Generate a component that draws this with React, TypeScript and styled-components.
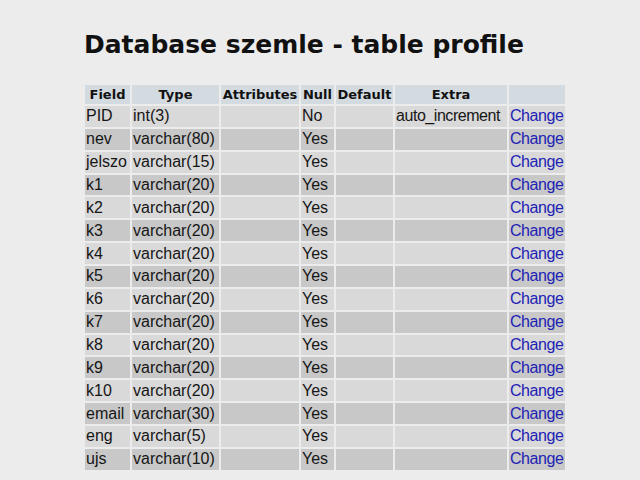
import React from "react";
import styled, { createGlobalStyle } from "styled-components";

const Global = createGlobalStyle`
  html, body { margin: 0; padding: 0; background: #ececec; }
  body { width: 640px; height: 480px; overflow: hidden; }
`;

const Page = styled.div`
  padding: 29px 0 0 83px;
  display: flex;
  flex-direction: column;
  align-items: flex-start;
`;

const Title = styled.h1`
  margin: 0 0 24px 1px;
  font-family: "DejaVu Sans", Verdana, sans-serif;
  font-weight: bold;
  font-size: 25px;
  line-height: 32px;
  color: #111;
`;

const Table = styled.table`
  width: 484px;
  border-collapse: separate;
  border-spacing: 2px;
  margin: -2px 0 0 0;
  table-layout: fixed;
`;

const Th = styled.th<{ $w: number }>`
  box-sizing: border-box;
  width: ${(p) => p.$w}px;
  height: 19px;
  padding: 0;
  background: #d3dbe0;
  font-family: "DejaVu Sans", Verdana, sans-serif;
  font-weight: bold;
  font-size: 13px;
  line-height: 19px;
  color: #111;
  text-align: center;
  white-space: nowrap;
  overflow: visible;
`;

const Td = styled.td<{ $dark: boolean; $tight?: boolean }>`
  height: 20.87px;
  padding: 0 0 0 1px;
  background: ${(p) => (p.$dark ? "#c8c8c8" : "#d9d9d9")};
  font-family: "Liberation Sans", Arial, sans-serif;
  font-size: 16px;
  line-height: 20px;
  letter-spacing: ${(p) => (p.$tight ? "-0.45px" : "0")};
  color: #161616;
  white-space: nowrap;
  overflow: hidden;
`;

const Link = styled.span`
  color: #1e22b4;
`;

const cols = [
  { name: "Field", w: 45 },
  { name: "Type", w: 87 },
  { name: "Attributes", w: 78 },
  { name: "Null", w: 33 },
  { name: "Default", w: 57 },
  { name: "Extra", w: 112 },
  { name: "", w: 56 },
];

const rows: [string, string, string, string][] = [
  ["PID", "int(3)", "No", "auto_increment"],
  ["nev", "varchar(80)", "Yes", ""],
  ["jelszo", "varchar(15)", "Yes", ""],
  ["k1", "varchar(20)", "Yes", ""],
  ["k2", "varchar(20)", "Yes", ""],
  ["k3", "varchar(20)", "Yes", ""],
  ["k4", "varchar(20)", "Yes", ""],
  ["k5", "varchar(20)", "Yes", ""],
  ["k6", "varchar(20)", "Yes", ""],
  ["k7", "varchar(20)", "Yes", ""],
  ["k8", "varchar(20)", "Yes", ""],
  ["k9", "varchar(20)", "Yes", ""],
  ["k10", "varchar(20)", "Yes", ""],
  ["email", "varchar(30)", "Yes", ""],
  ["eng", "varchar(5)", "Yes", ""],
  ["ujs", "varchar(10)", "Yes", ""],
];

export default function App() {
  return (
    <>
      <Global />
      <Page>
        <Title>Database szemle - table profile</Title>
        <Table>
          <thead>
            <tr>
              {cols.map((c, i) => (
                <Th key={i} $w={c.w}>
                  {c.name}
                </Th>
              ))}
            </tr>
          </thead>
          <tbody>
            {rows.map((r, i) => {
              const dark = i % 2 === 1;
              return (
                <tr key={r[0]}>
                  <Td $dark={dark}>{r[0]}</Td>
                  <Td $dark={dark}>{r[1]}</Td>
                  <Td $dark={dark}></Td>
                  <Td $dark={dark}>{r[2]}</Td>
                  <Td $dark={dark}></Td>
                  <Td $dark={dark} $tight>
                    {r[3]}
                  </Td>
                  <Td $dark={dark} $tight>
                    <Link>Change</Link>
                  </Td>
                </tr>
              );
            })}
          </tbody>
        </Table>
      </Page>
    </>
  );
}
